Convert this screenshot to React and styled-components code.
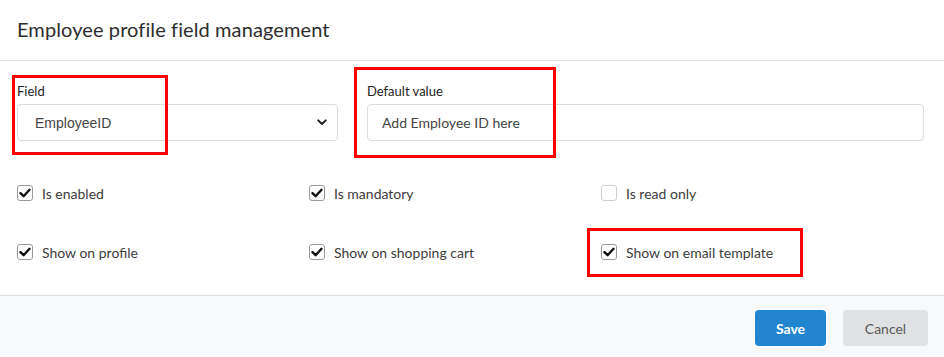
import React from "react";
import styled, { createGlobalStyle } from "styled-components";

const Global = createGlobalStyle`
  html, body { margin: 0; padding: 0; background: #fff; }
  body { font-family: Lato, "Open Sans", sans-serif; }
  * { box-sizing: border-box; }
`;

const Modal = styled.div`
  position: relative;
  width: 944px;
  height: 357px;
  background: #fff;
  display: flex;
  flex-direction: column;
`;

const Header = styled.div`
  height: 61px;
  padding: 0 17px;
  display: flex;
  align-items: center;
  border-bottom: 1px solid #dedede;
`;

const Title = styled.h2`
  margin: 0 0 2px;
  font-size: 20px;
  font-weight: 400;
  color: #2d2d2d;
  letter-spacing: 0.1px;
`;

const Body = styled.div`
  flex: 1;
  padding: 22px 20px 0 17px;
`;

const FieldsRow = styled.div`
  display: flex;
  gap: 29px;
`;

const Field = styled.div`
  display: flex;
  flex-direction: column;
  width: ${(p) => (p.$grow ? "auto" : "321px")};
  flex: ${(p) => (p.$grow ? "1" : "none")};
`;

const Label = styled.label`
  font-size: 13px;
  line-height: 16px;
  color: #222;
  margin-bottom: 5px;
`;

const SelectWrap = styled.div`
  height: 37px;
  border: 1px solid #dcdcdc;
  border-radius: 4px;
  display: flex;
  align-items: center;
  justify-content: space-between;
  padding: 0 10px 0 17px;
  font-family: "Liberation Sans", Arial, sans-serif;
  font-size: 14px;
  color: #444;
`;

const TextInput = styled.input`
  height: 37px;
  border: 1px solid #dcdcdc;
  border-radius: 4px;
  padding: 0 14px;
  font-family: Lato, sans-serif;
  font-size: 14px;
  color: #333;
  outline: none;
  &::placeholder { color: #444; }
`;

const Options = styled.div`
  display: grid;
  grid-template-columns: repeat(3, 292px);
  row-gap: 39px;
  margin-top: 42px;
`;

const Option = styled.label`
  display: flex;
  align-items: center;
  gap: 9px;
  height: 20px;
  font-size: 14px;
  color: #3c3c3c;
`;

const Box = styled.span`
  width: 16px;
  height: 16px;
  border: 1px solid ${(p) => (p.$checked ? "#9a9a9a" : "#cfcfcf")};
  border-radius: 3px;
  background: #fff;
  display: flex;
  align-items: center;
  justify-content: center;
`;

const Footer = styled.div`
  height: 62px;
  border-top: 1px solid #dedede;
  background: #f8f9fb;
  display: flex;
  justify-content: flex-end;
  align-items: flex-start;
  gap: 17px;
  padding: 14px 16px 0 0;
`;

const Button = styled.button`
  height: 36px;
  width: ${(p) => p.$w}px;
  border: none;
  border-radius: 4px;
  font-family: Lato, sans-serif;
  font-size: 14px;
  font-weight: ${(p) => (p.$primary ? 700 : 400)};
  background: ${(p) => (p.$primary ? "#2185d0" : "#e0e1e2")};
  color: ${(p) => (p.$primary ? "#fff" : "#5a5a5a")};
  cursor: pointer;
`;

const Highlight = styled.div`
  position: absolute;
  left: ${(p) => p.$x}px;
  top: ${(p) => p.$y}px;
  width: ${(p) => p.$w}px;
  height: ${(p) => p.$h}px;
  border: 3px solid #f00;
  pointer-events: none;
`;

const Check = () => (
  <svg width="12" height="10" viewBox="0 0 12 10">
    <path d="M1.5 5.2 L4.6 8.2 L10.5 1.8" fill="none" stroke="#111" strokeWidth="2.4" strokeLinecap="round" strokeLinejoin="round" />
  </svg>
);

const Chevron = () => (
  <svg width="10" height="7" viewBox="0 0 10 7">
    <path d="M1.3 1.4 L5 5 L8.7 1.4" fill="none" stroke="#222" strokeWidth="2" strokeLinecap="round" strokeLinejoin="round" />
  </svg>
);

const options = [
  { label: "Is enabled", checked: true },
  { label: "Is mandatory", checked: true },
  { label: "Is read only", checked: false },
  { label: "Show on profile", checked: true },
  { label: "Show on shopping cart", checked: true },
  { label: "Show on email template", checked: true },
];

export default function App() {
  return (
    <Modal>
      <Global />
      <Header>
        <Title>Employee profile field management</Title>
      </Header>
      <Body>
        <FieldsRow>
          <Field>
            <Label>Field</Label>
            <SelectWrap>
              <span>EmployeeID</span>
              <Chevron />
            </SelectWrap>
          </Field>
          <Field $grow>
            <Label>Default value</Label>
            <TextInput placeholder="Add Employee ID here" />
          </Field>
        </FieldsRow>
        <Options>
          {options.map((o) => (
            <Option key={o.label}>
              <Box $checked={o.checked}>{o.checked && <Check />}</Box>
              {o.label}
            </Option>
          ))}
        </Options>
      </Body>
      <Footer>
        <Button $primary $w={71}>Save</Button>
        <Button $w={85}>Cancel</Button>
      </Footer>
      <Highlight $x={12} $y={75} $w={156} $h={80} />
      <Highlight $x={354} $y={67} $w={202} $h={91} />
      <Highlight $x={587} $y={228} $w={216} $h={49} />
    </Modal>
  );
}
